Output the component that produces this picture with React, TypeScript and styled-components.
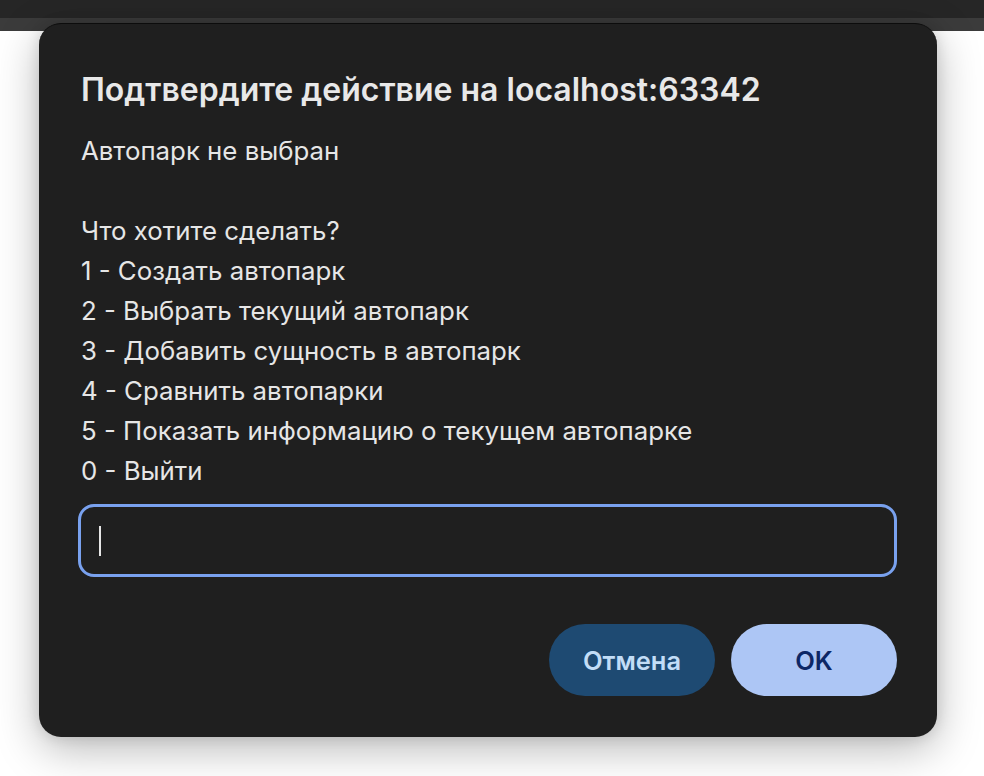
import React from "react";
import styled, { createGlobalStyle } from "styled-components";

const GlobalStyle = createGlobalStyle`
  html, body {
    margin: 0;
    padding: 0;
    background: #ffffff;
    font-family: Inter, "Noto Sans", sans-serif;
  }
`;

const Page = styled.div`
  width: 984px;
  height: 776px;
  overflow: hidden;
  position: relative;
`;

const TopBar = styled.div`
  height: 18px;
  background: #262626;
`;

const TopStrip = styled.div`
  height: 13px;
  background: #3b3b3b;
`;

const Dialog = styled.div`
  position: absolute;
  left: 39px;
  top: 23px;
  width: 898px;
  height: 714px;
  box-sizing: border-box;
  background: #1f1f1f;
  border-radius: 22px;
  border-top: 1px solid #0c0c0c;
  box-shadow: 0 12px 44px rgba(0, 0, 0, 0.28), 0 0 14px rgba(0, 0, 0, 0.12);
  padding: 46px 40px 40px 42px;
  color: #e6e6e6;
`;

const Title = styled.h1`
  margin: 0;
  font-size: 32px;
  font-weight: 600;
  line-height: 40px;
  color: #e8e8e8;
`;

const Message = styled.div`
  margin-top: 21px;
  font-size: 25.8px;
  line-height: 40px;
  white-space: pre-line;
  color: #e6e6e6;
`;

const Field = styled.div`
  margin-top: 13px;
  margin-left: -3px;
  width: 819px;
  height: 73px;
  box-sizing: border-box;
  border: 3px solid #79a1ee;
  border-radius: 16px;
  display: flex;
  align-items: center;
  padding-left: 18px;
`;

const Caret = styled.span`
  width: 2px;
  height: 30px;
  background: #e6e6e6;
`;

const Actions = styled.div`
  margin-top: 47px;
  display: flex;
  justify-content: flex-end;
  gap: 16px;
`;

const Button = styled.button<{ $primary?: boolean }>`
  width: 166px;
  height: 72px;
  border: none;
  border-radius: 36px;
  font-family: Inter, "Noto Sans", sans-serif;
  font-size: 25.5px;
  font-weight: 600;
  background: ${(p) => (p.$primary ? "#adc6f5" : "#1e4a72")};
  color: ${(p) => (p.$primary ? "#0d2766" : "#c2ddf7")};
`;

const message = `Автопарк не выбран

Что хотите сделать?
1 - Создать автопарк
2 - Выбрать текущий автопарк
3 - Добавить сущность в автопарк
4 - Сравнить автопарки
5 - Показать информацию о текущем автопарке
0 - Выйти`;

export default function App() {
  return (
    <Page>
      <GlobalStyle />
      <TopBar />
      <TopStrip />
      <Dialog>
        <Title>Подтвердите действие на localhost:63342</Title>
        <Message>{message}</Message>
        <Field>
          <Caret />
        </Field>
        <Actions>
          <Button>Отмена</Button>
          <Button $primary>OK</Button>
        </Actions>
      </Dialog>
    </Page>
  );
}
